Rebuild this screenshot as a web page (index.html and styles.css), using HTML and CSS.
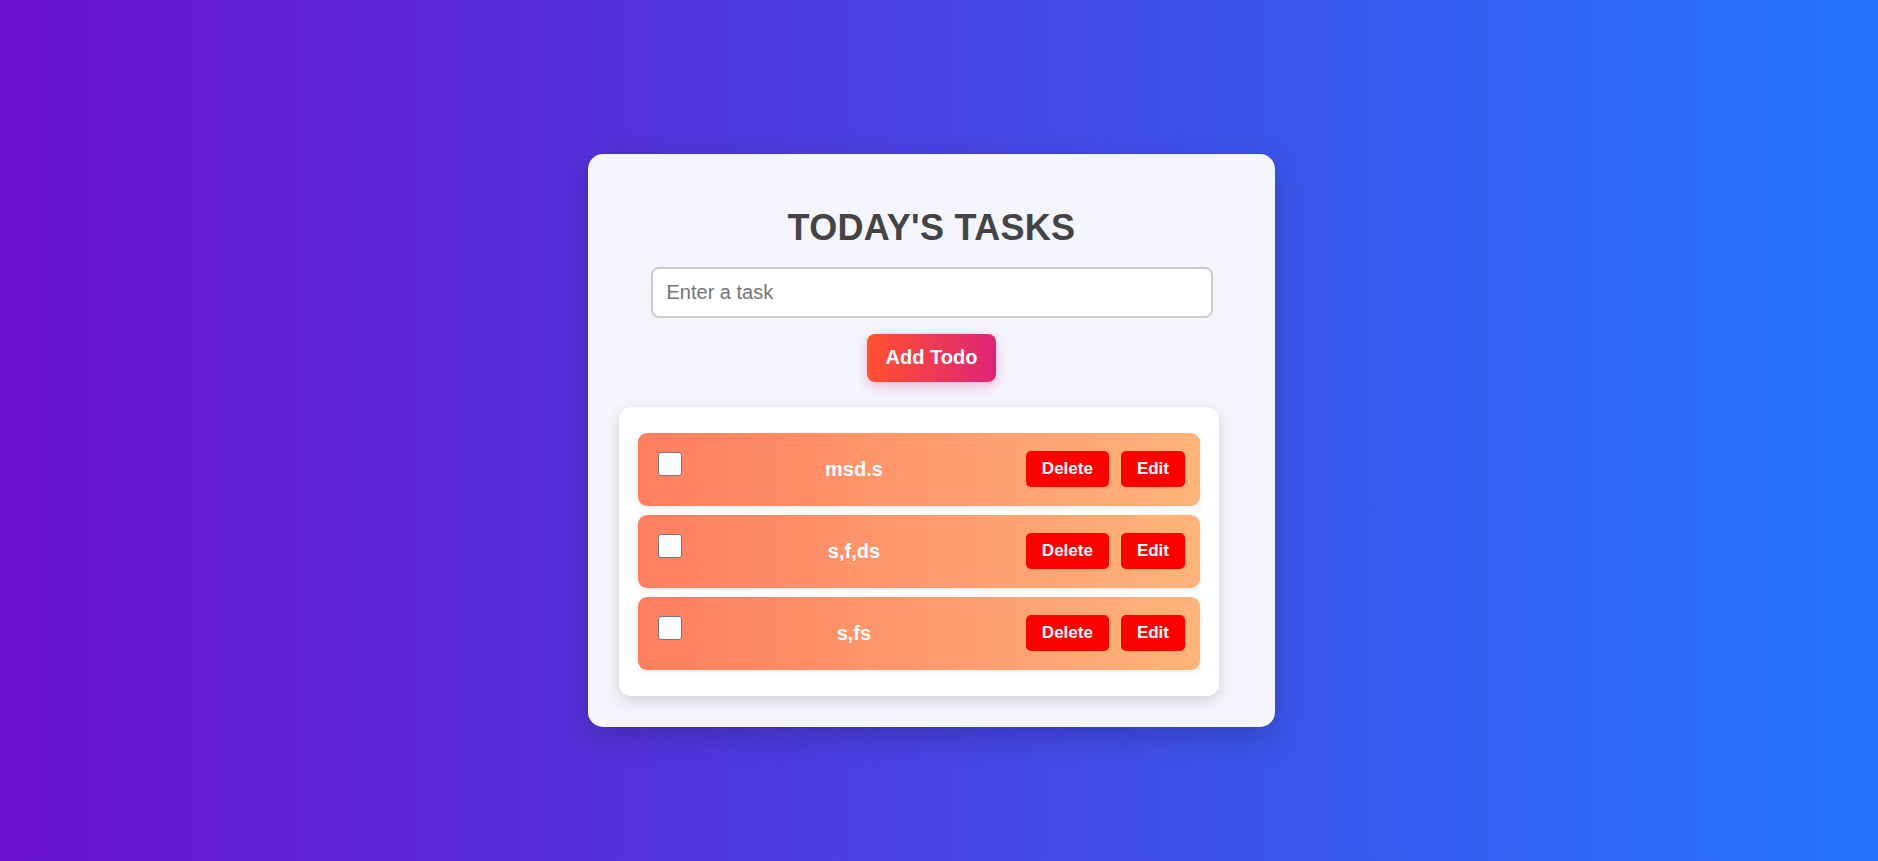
FILE: index.html
```html
<!DOCTYPE html>
<html lang="en">
<head>
<meta charset="UTF-8">
<title>Todo</title>
<link rel="stylesheet" href="styles.css">
</head>
<body>
  <main class="card">
    <h1 class="title">TODAY'S TASKS</h1>
    <input class="task-input" type="text" placeholder="Enter a task">
    <button class="add-btn">Add Todo</button>
    <ul class="list">
      <li class="row">
        <input class="check" type="checkbox">
        <span class="task">msd.s</span>
        <div class="actions">
          <button class="btn">Delete</button>
          <button class="btn">Edit</button>
        </div>
      </li>
      <li class="row">
        <input class="check" type="checkbox">
        <span class="task">s,f,ds</span>
        <div class="actions">
          <button class="btn">Delete</button>
          <button class="btn">Edit</button>
        </div>
      </li>
      <li class="row">
        <input class="check" type="checkbox">
        <span class="task">s,fs</span>
        <div class="actions">
          <button class="btn">Delete</button>
          <button class="btn">Edit</button>
        </div>
      </li>
    </ul>
  </main>
</body>
</html>
```
FILE: styles.css
```css
* { box-sizing: border-box; }
html, body { height: 100%; }
body {
  margin: 0;
  padding: 19px 15px 0 0;
  font-family: "Liberation Sans", Arial, sans-serif;
  background: linear-gradient(to right, #6a11cb, #2575fc);
  display: flex;
  justify-content: center;
  align-items: center;
}
.card {
  width: 687px;
  background: #f5f5fd;
  border-radius: 15px;
  padding: 53px 31px 31px;
  box-shadow: 0 10px 30px rgba(0, 0, 0, 0.2);
  display: flex;
  flex-direction: column;
  align-items: center;
}
.title {
  margin: 0;
  font-size: 36px;
  line-height: 41px;
  font-weight: bold;
  color: #444;
  letter-spacing: 0.3px;
}
.task-input {
  margin-top: 19px;
  width: 562px;
  height: 51px;
  border: 2px solid #ccc;
  border-radius: 8px;
  padding: 0 14px;
  font-family: "Liberation Sans", Arial, sans-serif;
  font-size: 20px;
  color: #333;
  background: #fff;
  outline: none;
}
.task-input::placeholder { color: #757575; }
.add-btn {
  margin-top: 16px;
  width: 129px;
  height: 48px;
  border: none;
  border-radius: 8px;
  background: linear-gradient(to right, #ff512f, #dd2476);
  color: #fff;
  font-family: "Liberation Sans", Arial, sans-serif;
  font-size: 20px;
  font-weight: bold;
  box-shadow: 0 4px 12px rgba(221, 36, 118, 0.3);
  padding: 0;
}
.list {
  list-style: none;
  margin: 25px 0 0;
  width: 600px;
  align-self: flex-start;
  background: #fff;
  border-radius: 12px;
  padding: 26px 19px;
  display: flex;
  flex-direction: column;
  gap: 9px;
  box-shadow: 0 5px 15px rgba(0, 0, 0, 0.15);
}
.row {
  height: 73px;
  display: flex;
  align-items: center;
  padding: 0 15px 0 20px;
  border-radius: 9px;
  background: linear-gradient(to right, #ff7e5f, #feb47b);
  box-shadow: 0 2px 6px rgba(0, 0, 0, 0.08);
}
.check {
  appearance: none;
  -webkit-appearance: none;
  margin: 0;
  width: 24px;
  height: 24px;
  align-self: flex-start;
  margin-top: 19px;
  background: #fff;
  border: 1.5px solid #767676;
  border-radius: 3px;
}
.task {
  flex: 1;
  text-align: center;
  color: #fff;
  font-size: 20px;
  font-weight: bold;
}
.actions {
  display: flex;
  gap: 12px;
}
.btn {
  height: 36px;
  padding: 0 16px;
  border: none;
  border-radius: 5px;
  background: #ff0000;
  color: #fff;
  font-family: "Liberation Sans", Arial, sans-serif;
  font-size: 17px;
  font-weight: bold;
}
```
